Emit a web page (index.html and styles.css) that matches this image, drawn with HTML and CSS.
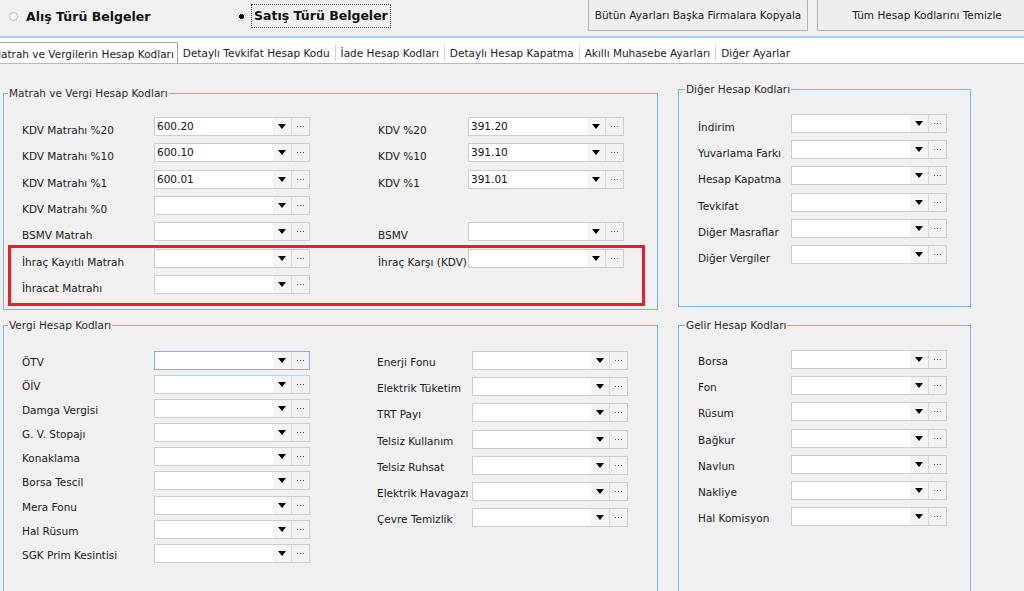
FILE: index.html
```html
<!DOCTYPE html>
<html lang="tr">
<head>
    <meta charset="UTF-8">
    <title>Hesap Kodları Ayarları</title>
    <link rel="stylesheet" href="styles.css">
</head>
<body>

    <!-- Üst bar: belge türü seçimi ve butonlar -->
    <div class="topbar">
        <div class="radio-group">
            <label class="radio"><span class="radio-dot"></span>Alış Türü Belgeler</label>
            <label class="radio checked"><span class="radio-dot"></span><span class="focus">Satış Türü Belgeler</span></label>
        </div>
        <button class="top-button">Bütün Ayarları Başka Firmalara Kopyala</button>
        <button class="top-button">Tüm Hesap Kodlarını Temizle</button>
    </div>

    <!-- Sekmeler -->
    <div class="tabs">
        <div class="tab active">Matrah ve Vergilerin Hesap Kodları</div>
        <div class="tab">Detaylı Tevkifat Hesap Kodu</div>
        <div class="tab">İade Hesap Kodları</div>
        <div class="tab">Detaylı Hesap Kapatma</div>
        <div class="tab">Akıllı Muhasebe Ayarları</div>
        <div class="tab">Diğer Ayarlar</div>
    </div>

    <div class="content">
        <div class="col-left">

            <fieldset class="group group-matrah">
                <legend>Matrah ve Vergi Hesap Kodları</legend>

                <div class="row">
                    <div class="field"><span class="label">KDV Matrahı %20</span><div class="combo"><span class="combo-text">600.20</span><span class="combo-arrow"><svg width="8" height="5"><path d="M0 0h8L4 5z"/></svg></span><span class="combo-btn"><svg width="7" height="1"><rect x="0" width="1" height="1"/><rect x="3" width="1" height="1"/><rect x="6" width="1" height="1"/></svg></span></div></div>
                    <div class="field field-right"><span class="label">KDV %20</span><div class="combo"><span class="combo-text">391.20</span><span class="combo-arrow"><svg width="8" height="5"><path d="M0 0h8L4 5z"/></svg></span><span class="combo-btn"><svg width="7" height="1"><rect x="0" width="1" height="1"/><rect x="3" width="1" height="1"/><rect x="6" width="1" height="1"/></svg></span></div></div>
                </div>
                <div class="row">
                    <div class="field"><span class="label">KDV Matrahı %10</span><div class="combo"><span class="combo-text">600.10</span><span class="combo-arrow"><svg width="8" height="5"><path d="M0 0h8L4 5z"/></svg></span><span class="combo-btn"><svg width="7" height="1"><rect x="0" width="1" height="1"/><rect x="3" width="1" height="1"/><rect x="6" width="1" height="1"/></svg></span></div></div>
                    <div class="field field-right"><span class="label">KDV %10</span><div class="combo"><span class="combo-text">391.10</span><span class="combo-arrow"><svg width="8" height="5"><path d="M0 0h8L4 5z"/></svg></span><span class="combo-btn"><svg width="7" height="1"><rect x="0" width="1" height="1"/><rect x="3" width="1" height="1"/><rect x="6" width="1" height="1"/></svg></span></div></div>
                </div>
                <div class="row">
                    <div class="field"><span class="label">KDV Matrahı %1</span><div class="combo"><span class="combo-text">600.01</span><span class="combo-arrow"><svg width="8" height="5"><path d="M0 0h8L4 5z"/></svg></span><span class="combo-btn"><svg width="7" height="1"><rect x="0" width="1" height="1"/><rect x="3" width="1" height="1"/><rect x="6" width="1" height="1"/></svg></span></div></div>
                    <div class="field field-right"><span class="label">KDV %1</span><div class="combo"><span class="combo-text">391.01</span><span class="combo-arrow"><svg width="8" height="5"><path d="M0 0h8L4 5z"/></svg></span><span class="combo-btn"><svg width="7" height="1"><rect x="0" width="1" height="1"/><rect x="3" width="1" height="1"/><rect x="6" width="1" height="1"/></svg></span></div></div>
                </div>
                <div class="row">
                    <div class="field"><span class="label">KDV Matrahı %0</span><div class="combo"><span class="combo-text"></span><span class="combo-arrow"><svg width="8" height="5"><path d="M0 0h8L4 5z"/></svg></span><span class="combo-btn"><svg width="7" height="1"><rect x="0" width="1" height="1"/><rect x="3" width="1" height="1"/><rect x="6" width="1" height="1"/></svg></span></div></div>
                </div>
                <div class="row">
                    <div class="field"><span class="label">BSMV Matrah</span><div class="combo"><span class="combo-text"></span><span class="combo-arrow"><svg width="8" height="5"><path d="M0 0h8L4 5z"/></svg></span><span class="combo-btn"><svg width="7" height="1"><rect x="0" width="1" height="1"/><rect x="3" width="1" height="1"/><rect x="6" width="1" height="1"/></svg></span></div></div>
                    <div class="field field-right"><span class="label">BSMV</span><div class="combo"><span class="combo-text"></span><span class="combo-arrow"><svg width="8" height="5"><path d="M0 0h8L4 5z"/></svg></span><span class="combo-btn"><svg width="7" height="1"><rect x="0" width="1" height="1"/><rect x="3" width="1" height="1"/><rect x="6" width="1" height="1"/></svg></span></div></div>
                </div>

                <!-- işaretli alan -->
                <div class="highlight">
                    <div class="row">
                        <div class="field"><span class="label">İhraç Kayıtlı Matrah</span><div class="combo"><span class="combo-text"></span><span class="combo-arrow"><svg width="8" height="5"><path d="M0 0h8L4 5z"/></svg></span><span class="combo-btn"><svg width="7" height="1"><rect x="0" width="1" height="1"/><rect x="3" width="1" height="1"/><rect x="6" width="1" height="1"/></svg></span></div></div>
                        <div class="field field-right"><span class="label">İhraç Karşı (KDV)</span><div class="combo"><span class="combo-text"></span><span class="combo-arrow"><svg width="8" height="5"><path d="M0 0h8L4 5z"/></svg></span><span class="combo-btn"><svg width="7" height="1"><rect x="0" width="1" height="1"/><rect x="3" width="1" height="1"/><rect x="6" width="1" height="1"/></svg></span></div></div>
                    </div>
                    <div class="row">
                        <div class="field"><span class="label">İhracat Matrahı</span><div class="combo"><span class="combo-text"></span><span class="combo-arrow"><svg width="8" height="5"><path d="M0 0h8L4 5z"/></svg></span><span class="combo-btn"><svg width="7" height="1"><rect x="0" width="1" height="1"/><rect x="3" width="1" height="1"/><rect x="6" width="1" height="1"/></svg></span></div></div>
                    </div>
                </div>
            </fieldset>

            <fieldset class="group group-vergi">
                <legend>Vergi Hesap Kodları</legend>
                <div class="vergi-cols">
                    <div class="stack stack-tight">
                        <div class="field"><span class="label">ÖTV</span><div class="combo focused"><span class="combo-text"></span><span class="combo-arrow"><svg width="8" height="5"><path d="M0 0h8L4 5z"/></svg></span><span class="combo-btn"><svg width="7" height="1"><rect x="0" width="1" height="1"/><rect x="3" width="1" height="1"/><rect x="6" width="1" height="1"/></svg></span></div></div>
                        <div class="field"><span class="label">ÖİV</span><div class="combo"><span class="combo-text"></span><span class="combo-arrow"><svg width="8" height="5"><path d="M0 0h8L4 5z"/></svg></span><span class="combo-btn"><svg width="7" height="1"><rect x="0" width="1" height="1"/><rect x="3" width="1" height="1"/><rect x="6" width="1" height="1"/></svg></span></div></div>
                        <div class="field"><span class="label">Damga Vergisi</span><div class="combo"><span class="combo-text"></span><span class="combo-arrow"><svg width="8" height="5"><path d="M0 0h8L4 5z"/></svg></span><span class="combo-btn"><svg width="7" height="1"><rect x="0" width="1" height="1"/><rect x="3" width="1" height="1"/><rect x="6" width="1" height="1"/></svg></span></div></div>
                        <div class="field"><span class="label">G. V. Stopajı</span><div class="combo"><span class="combo-text"></span><span class="combo-arrow"><svg width="8" height="5"><path d="M0 0h8L4 5z"/></svg></span><span class="combo-btn"><svg width="7" height="1"><rect x="0" width="1" height="1"/><rect x="3" width="1" height="1"/><rect x="6" width="1" height="1"/></svg></span></div></div>
                        <div class="field"><span class="label">Konaklama</span><div class="combo"><span class="combo-text"></span><span class="combo-arrow"><svg width="8" height="5"><path d="M0 0h8L4 5z"/></svg></span><span class="combo-btn"><svg width="7" height="1"><rect x="0" width="1" height="1"/><rect x="3" width="1" height="1"/><rect x="6" width="1" height="1"/></svg></span></div></div>
                        <div class="field"><span class="label">Borsa Tescil</span><div class="combo"><span class="combo-text"></span><span class="combo-arrow"><svg width="8" height="5"><path d="M0 0h8L4 5z"/></svg></span><span class="combo-btn"><svg width="7" height="1"><rect x="0" width="1" height="1"/><rect x="3" width="1" height="1"/><rect x="6" width="1" height="1"/></svg></span></div></div>
                        <div class="field"><span class="label">Mera Fonu</span><div class="combo"><span class="combo-text"></span><span class="combo-arrow"><svg width="8" height="5"><path d="M0 0h8L4 5z"/></svg></span><span class="combo-btn"><svg width="7" height="1"><rect x="0" width="1" height="1"/><rect x="3" width="1" height="1"/><rect x="6" width="1" height="1"/></svg></span></div></div>
                        <div class="field"><span class="label">Hal Rüsum</span><div class="combo"><span class="combo-text"></span><span class="combo-arrow"><svg width="8" height="5"><path d="M0 0h8L4 5z"/></svg></span><span class="combo-btn"><svg width="7" height="1"><rect x="0" width="1" height="1"/><rect x="3" width="1" height="1"/><rect x="6" width="1" height="1"/></svg></span></div></div>
                        <div class="field"><span class="label">SGK Prim Kesintisi</span><div class="combo"><span class="combo-text"></span><span class="combo-arrow"><svg width="8" height="5"><path d="M0 0h8L4 5z"/></svg></span><span class="combo-btn"><svg width="7" height="1"><rect x="0" width="1" height="1"/><rect x="3" width="1" height="1"/><rect x="6" width="1" height="1"/></svg></span></div></div>
                    </div>
                    <div class="stack stack-right">
                        <div class="field"><span class="label">Enerji Fonu</span><div class="combo"><span class="combo-text"></span><span class="combo-arrow"><svg width="8" height="5"><path d="M0 0h8L4 5z"/></svg></span><span class="combo-btn"><svg width="7" height="1"><rect x="0" width="1" height="1"/><rect x="3" width="1" height="1"/><rect x="6" width="1" height="1"/></svg></span></div></div>
                        <div class="field"><span class="label">Elektrik Tüketim</span><div class="combo"><span class="combo-text"></span><span class="combo-arrow"><svg width="8" height="5"><path d="M0 0h8L4 5z"/></svg></span><span class="combo-btn"><svg width="7" height="1"><rect x="0" width="1" height="1"/><rect x="3" width="1" height="1"/><rect x="6" width="1" height="1"/></svg></span></div></div>
                        <div class="field"><span class="label">TRT Payı</span><div class="combo"><span class="combo-text"></span><span class="combo-arrow"><svg width="8" height="5"><path d="M0 0h8L4 5z"/></svg></span><span class="combo-btn"><svg width="7" height="1"><rect x="0" width="1" height="1"/><rect x="3" width="1" height="1"/><rect x="6" width="1" height="1"/></svg></span></div></div>
                        <div class="field"><span class="label">Telsiz Kullanım</span><div class="combo"><span class="combo-text"></span><span class="combo-arrow"><svg width="8" height="5"><path d="M0 0h8L4 5z"/></svg></span><span class="combo-btn"><svg width="7" height="1"><rect x="0" width="1" height="1"/><rect x="3" width="1" height="1"/><rect x="6" width="1" height="1"/></svg></span></div></div>
                        <div class="field"><span class="label">Telsiz Ruhsat</span><div class="combo"><span class="combo-text"></span><span class="combo-arrow"><svg width="8" height="5"><path d="M0 0h8L4 5z"/></svg></span><span class="combo-btn"><svg width="7" height="1"><rect x="0" width="1" height="1"/><rect x="3" width="1" height="1"/><rect x="6" width="1" height="1"/></svg></span></div></div>
                        <div class="field"><span class="label">Elektrik Havagazı</span><div class="combo"><span class="combo-text"></span><span class="combo-arrow"><svg width="8" height="5"><path d="M0 0h8L4 5z"/></svg></span><span class="combo-btn"><svg width="7" height="1"><rect x="0" width="1" height="1"/><rect x="3" width="1" height="1"/><rect x="6" width="1" height="1"/></svg></span></div></div>
                        <div class="field"><span class="label">Çevre Temizlik</span><div class="combo"><span class="combo-text"></span><span class="combo-arrow"><svg width="8" height="5"><path d="M0 0h8L4 5z"/></svg></span><span class="combo-btn"><svg width="7" height="1"><rect x="0" width="1" height="1"/><rect x="3" width="1" height="1"/><rect x="6" width="1" height="1"/></svg></span></div></div>
                    </div>
                </div>
            </fieldset>
        </div>

        <div class="col-right">
            <fieldset class="group group-diger">
                <legend>Diğer Hesap Kodları</legend>
                <div class="stack">
                    <div class="field"><span class="label">İndirim</span><div class="combo"><span class="combo-text"></span><span class="combo-arrow"><svg width="8" height="5"><path d="M0 0h8L4 5z"/></svg></span><span class="combo-btn"><svg width="7" height="1"><rect x="0" width="1" height="1"/><rect x="3" width="1" height="1"/><rect x="6" width="1" height="1"/></svg></span></div></div>
                    <div class="field"><span class="label">Yuvarlama Farkı</span><div class="combo"><span class="combo-text"></span><span class="combo-arrow"><svg width="8" height="5"><path d="M0 0h8L4 5z"/></svg></span><span class="combo-btn"><svg width="7" height="1"><rect x="0" width="1" height="1"/><rect x="3" width="1" height="1"/><rect x="6" width="1" height="1"/></svg></span></div></div>
                    <div class="field"><span class="label">Hesap Kapatma</span><div class="combo"><span class="combo-text"></span><span class="combo-arrow"><svg width="8" height="5"><path d="M0 0h8L4 5z"/></svg></span><span class="combo-btn"><svg width="7" height="1"><rect x="0" width="1" height="1"/><rect x="3" width="1" height="1"/><rect x="6" width="1" height="1"/></svg></span></div></div>
                    <div class="field"><span class="label">Tevkifat</span><div class="combo"><span class="combo-text"></span><span class="combo-arrow"><svg width="8" height="5"><path d="M0 0h8L4 5z"/></svg></span><span class="combo-btn"><svg width="7" height="1"><rect x="0" width="1" height="1"/><rect x="3" width="1" height="1"/><rect x="6" width="1" height="1"/></svg></span></div></div>
                    <div class="field"><span class="label">Diğer Masraflar</span><div class="combo"><span class="combo-text"></span><span class="combo-arrow"><svg width="8" height="5"><path d="M0 0h8L4 5z"/></svg></span><span class="combo-btn"><svg width="7" height="1"><rect x="0" width="1" height="1"/><rect x="3" width="1" height="1"/><rect x="6" width="1" height="1"/></svg></span></div></div>
                    <div class="field"><span class="label">Diğer Vergiler</span><div class="combo"><span class="combo-text"></span><span class="combo-arrow"><svg width="8" height="5"><path d="M0 0h8L4 5z"/></svg></span><span class="combo-btn"><svg width="7" height="1"><rect x="0" width="1" height="1"/><rect x="3" width="1" height="1"/><rect x="6" width="1" height="1"/></svg></span></div></div>
                </div>
            </fieldset>

            <fieldset class="group group-gelir">
                <legend>Gelir Hesap Kodları</legend>
                <div class="stack">
                    <div class="field"><span class="label">Borsa</span><div class="combo"><span class="combo-text"></span><span class="combo-arrow"><svg width="8" height="5"><path d="M0 0h8L4 5z"/></svg></span><span class="combo-btn"><svg width="7" height="1"><rect x="0" width="1" height="1"/><rect x="3" width="1" height="1"/><rect x="6" width="1" height="1"/></svg></span></div></div>
                    <div class="field"><span class="label">Fon</span><div class="combo"><span class="combo-text"></span><span class="combo-arrow"><svg width="8" height="5"><path d="M0 0h8L4 5z"/></svg></span><span class="combo-btn"><svg width="7" height="1"><rect x="0" width="1" height="1"/><rect x="3" width="1" height="1"/><rect x="6" width="1" height="1"/></svg></span></div></div>
                    <div class="field"><span class="label">Rüsum</span><div class="combo"><span class="combo-text"></span><span class="combo-arrow"><svg width="8" height="5"><path d="M0 0h8L4 5z"/></svg></span><span class="combo-btn"><svg width="7" height="1"><rect x="0" width="1" height="1"/><rect x="3" width="1" height="1"/><rect x="6" width="1" height="1"/></svg></span></div></div>
                    <div class="field"><span class="label">Bağkur</span><div class="combo"><span class="combo-text"></span><span class="combo-arrow"><svg width="8" height="5"><path d="M0 0h8L4 5z"/></svg></span><span class="combo-btn"><svg width="7" height="1"><rect x="0" width="1" height="1"/><rect x="3" width="1" height="1"/><rect x="6" width="1" height="1"/></svg></span></div></div>
                    <div class="field"><span class="label">Navlun</span><div class="combo"><span class="combo-text"></span><span class="combo-arrow"><svg width="8" height="5"><path d="M0 0h8L4 5z"/></svg></span><span class="combo-btn"><svg width="7" height="1"><rect x="0" width="1" height="1"/><rect x="3" width="1" height="1"/><rect x="6" width="1" height="1"/></svg></span></div></div>
                    <div class="field"><span class="label">Nakliye</span><div class="combo"><span class="combo-text"></span><span class="combo-arrow"><svg width="8" height="5"><path d="M0 0h8L4 5z"/></svg></span><span class="combo-btn"><svg width="7" height="1"><rect x="0" width="1" height="1"/><rect x="3" width="1" height="1"/><rect x="6" width="1" height="1"/></svg></span></div></div>
                    <div class="field"><span class="label">Hal Komisyon</span><div class="combo"><span class="combo-text"></span><span class="combo-arrow"><svg width="8" height="5"><path d="M0 0h8L4 5z"/></svg></span><span class="combo-btn"><svg width="7" height="1"><rect x="0" width="1" height="1"/><rect x="3" width="1" height="1"/><rect x="6" width="1" height="1"/></svg></span></div></div>
                </div>
            </fieldset>
        </div>
    </div>

</body>
</html>
```

FILE: styles.css
```css
body {
    margin: 0;
    padding: 0;
    background-color: #f0f0f0;
    font-family: 'DejaVu Sans', sans-serif;
    font-size: 10.5px;
    color: #1a1a1a;
    overflow: hidden;
    height: 591px;
}

/* üst bar */
.topbar {
    display: flex;
    align-items: flex-start;
    height: 36px;
    border-bottom: 2px solid #a9cdee;
}

.radio-group {
    flex: none;
    display: flex;
    align-items: center;
    width: 588px;
    height: 32px;
}

.radio {
    display: flex;
    align-items: center;
    font-weight: bold;
    font-size: 12.5px;
    color: #111;
}

.radio:first-child {
    margin-left: 9px;
    width: 228px;
}

.radio-dot {
    width: 7px;
    height: 7px;
    border: 1px solid #b5b5b5;
    border-radius: 50%;
    background: #fff;
    margin-right: 8px;
    box-sizing: content-box;
}

.radio.checked .radio-dot {
    border-color: #c8c8c8;
    background: radial-gradient(circle, #000 0 2.2px, #fff 2.8px);
    margin-right: 5px;
}

.focus {
    border: 1px dotted #444;
    padding: 3px 2px 4px 2px;
}

.top-button {
    flex: none;
    width: 220px;
    height: 32px;
    margin-top: -1px;
    margin-right: 9px;
    background-color: #eeeeee;
    border: 1px solid #b4b4b4;
    font-family: 'DejaVu Sans', sans-serif;
    font-size: 10.5px;
    color: #1a1a1a;
    padding: 0;
}

/* sekmeler */
.tabs {
    display: flex;
    align-items: flex-end;
    height: 26px;
    background-color: #fff;
    border-bottom: 1px solid #b9b9b9;
    box-sizing: border-box;
    overflow: hidden;
}

.tab {
    height: 16px;
    line-height: 16px;
    padding: 0 5px;
    margin-bottom: 2px;
    border-left: 1px solid #d0d0d0;
    white-space: nowrap;
}

.tab.active {
    margin-left: -14px;
    margin-bottom: -1px;
    height: 21px;
    line-height: 22px;
    border: 1px solid #a4a4a4;
    border-bottom: none;
    padding-right: 3px;
}

.tab.active + .tab {
    border-left: none;
}

/* içerik */
.content {
    display: flex;
    gap: 20px;
    padding-left: 3px;
}

.col-left {
    width: 655px;
    margin-top: 23px;
}

.col-right {
    width: 293px;
    margin-top: 19px;
}

.group {
    margin: 0;
    padding: 0;
    border: 1px solid #7cb4e8;
    box-sizing: border-box;
    min-width: 0;
}

.group legend {
    padding: 0 1px;
    line-height: 13px;
    color: #2a2a2a;
}

.group-matrah {
    padding: 17px 0 3px 18px;
}

.group-matrah legend,
.group-vergi legend {
    margin-left: -14px;
}

.group-vergi {
    margin-top: 9px;
    padding: 19px 0 80px 18px;
}

.group-diger {
    padding: 17.5px 0 42px 19px;
}

.group-diger legend,
.group-gelir legend {
    margin-left: -13px;
}

.group-gelir {
    margin-top: 11.5px;
    padding: 18px 0 100px 19px;
}

/* satırlar */
.row {
    display: flex;
    margin-bottom: 7.3px;
}

.highlight .row:last-child {
    margin-bottom: 0;
}

.field {
    display: flex;
    align-items: flex-start;
    height: 19px;
}

.label {
    width: 132px;
    flex: none;
    padding-top: 7px;
    line-height: 13px;
    white-space: nowrap;
}

.group-vergi .label,
.group-gelir .label {
    padding-top: 5px;
}

.field-right {
    margin-left: 68px;
}

.field-right .label {
    width: 90px;
}

.highlight {
    width: 637px;
    box-sizing: border-box;
    margin: -3.5px 0 0 -14px;
    padding: 1px 0 8.7px 11px;
    border: 3px solid #e3212a;
}

.vergi-cols {
    display: flex;
}

.stack {
    display: flex;
    flex-direction: column;
    gap: 7.3px;
}

.stack-tight {
    gap: 5.1px;
}

.stack-right {
    margin-left: 67px;
    gap: 7.2px;
}

.stack-right .label {
    width: 95px;
}

.group-diger .label,
.group-gelir .label {
    width: 93px;
}

.group-gelir .stack {
    gap: 7.2px;
}

.group-diger .stack {
    gap: 7.4px;
}

/* combobox */
.combo {
    display: flex;
    width: 156px;
    height: 19px;
    box-sizing: border-box;
    border: 1px solid #cdcdcd;
    background-color: #fff;
}

.combo.focused {
    border-color: #7db3e8;
}

.combo-text {
    flex: 1;
    padding-left: 2px;
    line-height: 16px;
    color: #111;
}

.combo-arrow {
    width: 18px;
    display: flex;
    align-items: center;
    justify-content: center;
    background-color: #f4f4f4;
}

.combo-btn {
    width: 17px;
    display: flex;
    align-items: center;
    justify-content: center;
    background-color: #f2f2f2;
    border-left: 1px solid #dadada;
}

.combo-btn svg {
    fill: #555;
}
```
